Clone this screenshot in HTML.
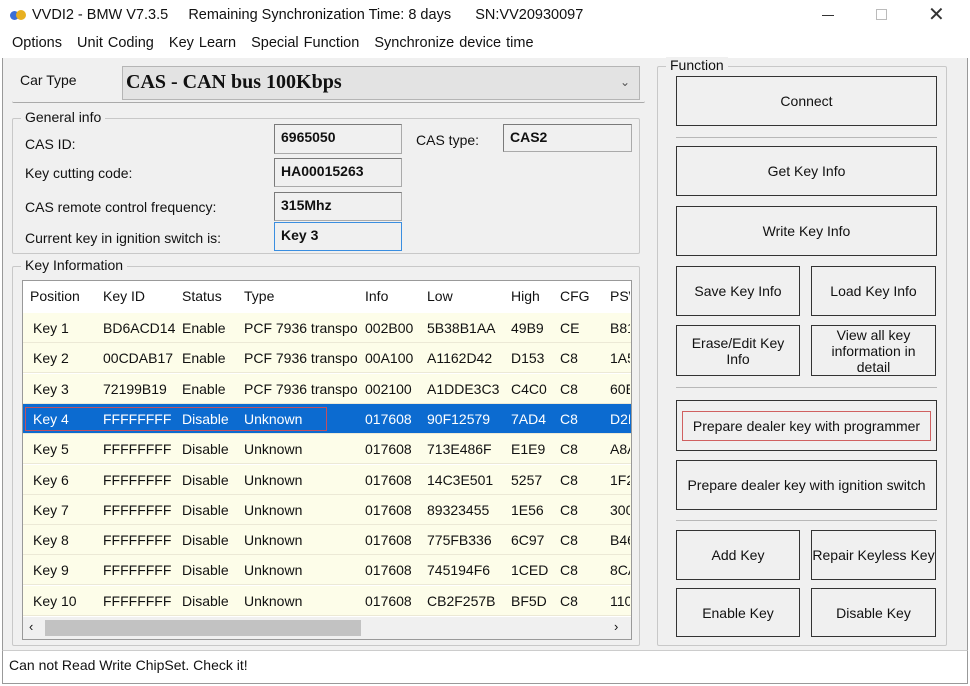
<!DOCTYPE html>
<html><head><meta charset="utf-8"><style>
*{box-sizing:border-box;margin:0;padding:0}
body{width:970px;height:686px;background:#fff;font-family:"Liberation Sans","DejaVu Sans",sans-serif;font-size:14px;color:#111;position:relative;overflow:hidden}
.a{position:absolute}
.grp{position:absolute;border:1px solid #c8c8c8;border-radius:2px}
.lg{position:absolute;background:#f0f0f0;padding:0 4px;font-size:14px;top:-10px;left:8px}
.tb{position:absolute;border:1px solid #7a7a7a;background:#f0f0f0;font-weight:bold;padding:4px 6px;font-size:14px;border-right-color:#aaa;border-bottom-color:#aaa}
.btn{position:absolute;border:1px solid #333;background:#f0f0f0;display:flex;align-items:center;justify-content:center;text-align:center;font-size:14px;line-height:16px;white-space:nowrap}
.sep{position:absolute;height:1px;background:#b8b8b8;left:676px;width:261px}
.row{position:absolute;left:23px;width:608px;height:30px;background:#fdfde9;border-bottom:1px solid #ece9d6}
.row span,.hd span{position:absolute;top:7px;white-space:nowrap;overflow:hidden}
.sel{background:#0c6bd0;color:#fff}
</style></head><body>
<!-- title -->
<div class="a" style="left:10px;top:9px;width:16px;height:12px"><div class="a" style="left:0;top:2px;width:9px;height:9px;border-radius:50%;background:#3b6fd6"></div><div class="a" style="left:6px;top:1px;width:10px;height:10px;border-radius:50%;background:#e8b020"></div></div>
<div class="a" style="left:32px;top:7px;font-size:14.5px;white-space:nowrap">VVDI2 - BMW V7.3.5&nbsp;&nbsp;&nbsp;&nbsp;&nbsp;Remaining Synchronization Time: 8 days&nbsp;&nbsp;&nbsp;&nbsp;&nbsp;&nbsp;SN:VV20930097</div>
<div class="a" style="left:822px;top:15px;width:12px;height:1px;background:#333"></div>
<div class="a" style="left:876px;top:9px;width:11px;height:11px;border:1px solid #bbb"></div>
<div class="a" style="left:928px;top:2px;font-size:20px;color:#333">✕</div>
<div class="a" style="left:12px;top:35px;font-size:14.5px;white-space:nowrap;word-spacing:1px">Options&nbsp;&nbsp;&nbsp;Unit Coding&nbsp;&nbsp;&nbsp;Key Learn&nbsp;&nbsp;&nbsp;Special Function&nbsp;&nbsp;&nbsp;Synchronize device time</div>
<!-- body -->
<div class="a" style="left:2px;top:58px;width:966px;height:592px;background:#f0f0f0;border-left:1px solid #999;border-right:1px solid #999"></div>
<div class="grp" style="left:12px;top:62px;width:633px;height:41px;border-color:#d0d0d0;border-top:none;border-left:none;border-right:none;border-bottom:1px solid #aaa"></div>
<div class="a" style="left:20px;top:72px">Car Type</div>
<div class="a" style="left:122px;top:66px;width:518px;height:34px;background:#e3e3e3;border:1px solid #b5b5b5"></div>
<div class="a" style="left:126px;top:71px;font-family:'Liberation Serif',serif;font-weight:bold;font-size:20px">CAS - CAN bus 100Kbps</div>
<div class="a" style="left:620px;top:75px;font-size:12px;color:#555">⌄</div>

<div class="grp" style="left:12px;top:118px;width:628px;height:136px"><div class="lg">General info</div></div>
<div class="a" style="left:25px;top:136px">CAS ID:</div>
<div class="a" style="left:25px;top:165px">Key cutting code:</div>
<div class="a" style="left:25px;top:199px">CAS remote control frequency:</div>
<div class="a" style="left:25px;top:230px">Current key in ignition switch is:</div>
<div class="tb" style="left:274px;top:124px;width:128px;height:30px">6965050</div>
<div class="tb" style="left:274px;top:158px;width:128px;height:29px">HA00015263</div>
<div class="tb" style="left:274px;top:192px;width:128px;height:29px">315Mhz</div>
<div class="tb" style="left:274px;top:222px;width:128px;height:29px;border-color:#3a8ee0">Key 3</div>
<div class="a" style="left:416px;top:132px">CAS type:</div>
<div class="tb" style="left:503px;top:124px;width:129px;height:28px">CAS2</div>

<div class="grp" style="left:12px;top:266px;width:628px;height:380px"><div class="lg">Key Information</div></div>
<div class="a" style="left:22px;top:280px;width:610px;height:360px;background:#fff;border:1px solid #999"></div>
<div class="hd a" style="left:23px;top:281px;width:608px;height:32px;background:#fff">
<span style="left:7px">Position</span><span style="left:80px">Key ID</span><span style="left:159px">Status</span><span style="left:221px">Type</span><span style="left:342px">Info</span><span style="left:404px">Low</span><span style="left:488px">High</span><span style="left:537px">CFG</span><span style="left:587px;width:20px">PSW</span>
</div>
<div id="rows"></div>
<div class="a" style="left:23px;top:617px;width:608px;height:22px;background:#f0f0f0"></div>
<div class="a" style="left:45px;top:620px;width:316px;height:16px;background:#c2c2c2"></div>
<div class="a" style="left:29px;top:619px;font-size:13px">‹</div>
<div class="a" style="left:614px;top:619px;font-size:13px">›</div>

<div class="grp" style="left:657px;top:66px;width:290px;height:580px"><div class="lg">Function</div></div>
<div class="btn" style="left:676px;top:76px;width:261px;height:50px">Connect</div>
<div class="sep" style="top:137px"></div>
<div class="btn" style="left:676px;top:146px;width:261px;height:50px">Get Key Info</div>
<div class="btn" style="left:676px;top:206px;width:261px;height:50px">Write Key Info</div>
<div class="btn" style="left:676px;top:266px;width:124px;height:50px">Save Key Info</div>
<div class="btn" style="left:811px;top:266px;width:125px;height:50px">Load Key Info</div>
<div class="btn" style="left:676px;top:325px;width:124px;height:51px">Erase/Edit Key<br>Info</div>
<div class="btn" style="left:811px;top:325px;width:125px;height:51px">View all key<br>information in<br>detail</div>
<div class="sep" style="top:387px"></div>
<div class="btn" style="left:676px;top:400px;width:261px;height:51px"><div style="border:1px solid #d06060;padding:6px 2px;width:249px">Prepare dealer key with programmer</div></div>
<div class="btn" style="left:676px;top:460px;width:261px;height:50px;font-size:14px">Prepare dealer key with ignition switch</div>
<div class="sep" style="top:520px"></div>
<div class="btn" style="left:676px;top:530px;width:124px;height:50px">Add Key</div>
<div class="btn" style="left:811px;top:530px;width:125px;height:50px">Repair Keyless Key</div>
<div class="btn" style="left:676px;top:588px;width:124px;height:49px">Enable Key</div>
<div class="btn" style="left:811px;top:588px;width:125px;height:49px">Disable Key</div>

<div class="a" style="left:2px;top:650px;width:966px;height:34px;background:#fff;border:1px solid #999;border-top:1px solid #ccc"></div>
<div class="a" style="left:9px;top:657px">Can not Read Write ChipSet. Check it!</div>
<script>
var d=[["Key 1","BD6ACD14","Enable","PCF 7936 transpo","002B00","5B38B1AA","49B9","CE","B81"],
["Key 2","00CDAB17","Enable","PCF 7936 transpo","00A100","A1162D42","D153","C8","1A5"],
["Key 3","72199B19","Enable","PCF 7936 transpo","002100","A1DDE3C3","C4C0","C8","60E"],
["Key 4","FFFFFFFF","Disable","Unknown","017608","90F12579","7AD4","C8","D2E"],
["Key 5","FFFFFFFF","Disable","Unknown","017608","713E486F","E1E9","C8","A8A"],
["Key 6","FFFFFFFF","Disable","Unknown","017608","14C3E501","5257","C8","1F2"],
["Key 7","FFFFFFFF","Disable","Unknown","017608","89323455","1E56","C8","300"],
["Key 8","FFFFFFFF","Disable","Unknown","017608","775FB336","6C97","C8","B46"],
["Key 9","FFFFFFFF","Disable","Unknown","017608","745194F6","1CED","C8","8CA"],
["Key 10","FFFFFFFF","Disable","Unknown","017608","CB2F257B","BF5D","C8","110"]];
var L=[10,80,159,221,342,404,488,537,587],W=[68,78,60,115,60,80,45,45,20],h="";
d.forEach(function(r,i){h+='<div class="row'+(i==3?' sel':'')+'" style="top:'+(313+i*30.3)+'px">';
r.forEach(function(c,j){h+='<span style="left:'+L[j]+'px;width:'+W[j]+'px">'+c+'</span>'});
if(i==3)h+='<div style="position:absolute;left:2px;top:3px;width:302px;height:24px;border:1px solid #c05060"></div>';
h+='</div>'});
document.getElementById('rows').innerHTML=h;
</script>
</body></html>
